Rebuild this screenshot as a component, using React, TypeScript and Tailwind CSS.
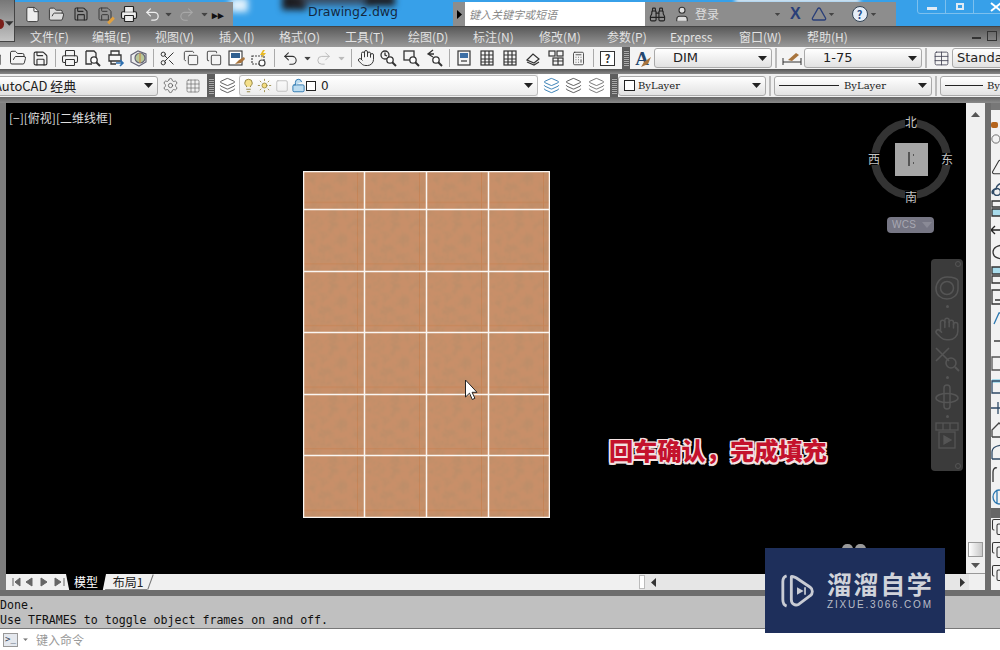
import type { ReactNode } from "react";
import {
  Binoculars, Calculator, Circle, Copy, File, FolderOpen, Grid3x3, Hand, Layers,
  Lightbulb, LockOpen, Printer, Redo2, Save, Scissors, Settings, Square,
  Sun, Table, Triangle, Undo2, User,
} from "lucide-react";

const ui = "font-['Noto_Sans_CJK_SC','Noto_Sans',sans-serif]";
const menus = [
  ["文件(F)", "w-[62px]"], ["编辑(E)", "w-[63px]"], ["视图(V)", "w-[64px]"], ["插入(I)", "w-[60px]"],
  ["格式(O)", "w-[66px]"], ["工具(T)", "w-[63px]"], ["绘图(D)", "w-[65px]"], ["标注(N)", "w-[66px]"],
  ["修改(M)", "w-[68px]"], ["参数(P)", "w-[63px]"], ["Express", "w-[69px]"], ["窗口(W)", "w-[68px]"], ["帮助(H)", "w-[50px]"],
];

function Slot({ children }: { children: ReactNode }) {
  return <div className="flex h-full w-[23px] shrink-0 items-center justify-center text-[#333]">{children}</div>;
}

function Sep() {
  return <div className="mx-[2.5px] h-[18px] w-px shrink-0 bg-[#aaa]" />;
}

function Grip() {
  return (
    <div className="flex h-full w-[8px] shrink-0 items-center justify-center bg-[#5e5e5e]">
      <div className="h-[16px] w-[5px] bg-[repeating-linear-gradient(0deg,#aaa_0,#aaa_1px,#555_1px,#555_2px)]" />
    </div>
  );
}

function Arrow({ className = "text-[#222]" }: { className?: string }) {
  return (
    <svg width="9" height="5" viewBox="0 0 9 5" className={className}>
      <path d="M0 0h9L4.5 5z" fill="currentColor" />
    </svg>
  );
}

function Combo({ className, children }: { className: string; children: ReactNode }) {
  return (
    <div className={`flex h-[20px] shrink-0 items-center justify-between overflow-hidden rounded-[3px] border border-[#aaa] bg-gradient-to-b from-white to-[#e2e2e2] pr-[4px] ${className}`}>
      {children}
      <Arrow />
    </div>
  );
}

function ZoomGlyph({ kind }: { kind: "realtime" | "window" | "prev" | "page" }) {
  return (
    <svg width="19" height="18" viewBox="0 0 19 18" fill="none" stroke="#333" strokeWidth="1.3">
      {kind === "realtime" && <circle cx="6" cy="6" r="4" />}
      {kind === "realtime" && <path d="M6 3.5V6l2 1" />}
      {kind === "window" && <rect x="2" y="2" width="10" height="9" />}
      {kind === "page" && <path d="M3 2h8l2 2v5M3 2v13h6" />}
      {kind === "prev" && <path d="M8 1L3 5l5 3M3 5h6" />}
      <circle cx="11" cy="11" r="3.2" fill="#fff" />
      <path d="M13.5 13.5l3.5 3.5" strokeWidth="2" />
    </svg>
  );
}

function PanelGlyph({ kind }: { kind: "props" | "design" | "sheet" | "markup" }) {
  return (
    <svg width="18" height="18" viewBox="0 0 18 18" fill="none" stroke="#333" strokeWidth="1.2">
      {kind === "props" && <><rect x="3" y="2" width="12" height="14" /><rect x="5" y="4" width="8" height="5" fill="#3d6fa5" stroke="none" /><path d="M6 12h6" /></>}
      {kind === "design" && <><rect x="3" y="2" width="12" height="14" /><path d="M7 2v14M11 2v14M3 6h12M3 10h12M3 13h12" /></>}
      {kind === "sheet" && <><path d="M3 11l6-6 6 5-5 4z" /><path d="M3 13l7 3 5-3" /></>}
      {kind === "markup" && <><rect x="2" y="2" width="6" height="5" /><rect x="10" y="2" width="6" height="5" /><rect x="6" y="9" width="10" height="7" /><path d="M6 12h10M11 9v7" /></>}
    </svg>
  );
}

function ToolbarOne() {
  return (
    <div className="ml-[-17px] flex h-[22px] w-[1017px] shrink-0 items-center overflow-hidden bg-[#f4f4f4]">
      <Slot><File size={17} strokeWidth={1.3} /></Slot>
      <Slot><FolderOpen size={18} strokeWidth={1.3} /></Slot>
      <Slot><Save size={17} strokeWidth={1.6} /></Slot>
      <Sep />
      <Slot><Printer size={18} strokeWidth={1.4} /></Slot>
      <Slot><ZoomGlyph kind="page" /></Slot>
      <Slot>
        <svg width="19" height="18" viewBox="0 0 19 18" fill="none" stroke="#333" strokeWidth="1.3">
          <path d="M5 6V2h8v4M3 6h12v6H3zM5 12v3h5" />
          <path d="M10 14h7M14 11l3 3-3 3" stroke="#2d6fb0" strokeWidth="1.6" />
        </svg>
      </Slot>
      <Slot>
        <svg width="19" height="18" viewBox="0 0 19 18" fill="none" stroke="#667" strokeWidth="1.2">
          <path d="M2 6l7-4 8 3v8l-7 4-8-4z" fill="#eee" />
          <circle cx="11" cy="9" r="5" fill="#b8c79a" />
          <path d="M11 4v10" stroke="#c98f4a" />
        </svg>
      </Slot>
      <Sep />
      <Slot><Scissors size={17} strokeWidth={1.4} /></Slot>
      <Slot><Copy size={16} strokeWidth={1.3} /></Slot>
      <Slot><Copy size={16} strokeWidth={1.6} className="text-[#555]" /></Slot>
      <Slot>
        <svg width="19" height="18" viewBox="0 0 19 18" fill="none" stroke="#333" strokeWidth="1.1">
          <rect x="2" y="2" width="13" height="14" fill="#fff" />
          <rect x="4" y="4" width="9" height="5" fill="#2f5f8f" stroke="none" />
          <path d="M8 15l4-4 5-3 1 2-4 4z" fill="#a8743d" stroke="none" />
        </svg>
      </Slot>
      <Slot>
        <svg width="19" height="18" viewBox="0 0 19 18" fill="none" stroke="#444" strokeWidth="1.2">
          <path d="M2 7h12v8H2z" strokeDasharray="2 1" />
          <circle cx="12" cy="14" r="3" fill="#fff" />
          <path d="M13 1l-3 5h3l-2 4 5-6h-3l2-3z" fill="#e8b923" stroke="none" />
        </svg>
      </Slot>
      <Sep />
      <div className="ml-[2px]"><Slot><Undo2 size={17} strokeWidth={1.5} /></Slot></div>
      <div className="flex w-[10px] shrink-0 justify-center"><Arrow className="scale-75 text-[#444]" /></div>
      <Slot><Redo2 size={17} strokeWidth={1.4} className="text-[#bbb]" /></Slot>
      <div className="flex w-[13px] shrink-0 justify-center"><Arrow className="scale-75 text-[#bbb]" /></div>
      <Sep />
      <Slot><Hand size={18} strokeWidth={1.3} /></Slot>
      <Slot><ZoomGlyph kind="realtime" /></Slot>
      <Slot><ZoomGlyph kind="window" /></Slot>
      <Slot><ZoomGlyph kind="prev" /></Slot>
      <Sep />
      <Slot><PanelGlyph kind="props" /></Slot>
      <Slot><PanelGlyph kind="design" /></Slot>
      <Slot><PanelGlyph kind="design" /></Slot>
      <Slot><PanelGlyph kind="sheet" /></Slot>
      <Slot><PanelGlyph kind="markup" /></Slot>
      <Slot><Calculator size={15} strokeWidth={1.3} /></Slot>
      <Sep />
      <Slot><div className="flex h-[15px] w-[15px] items-center justify-center border border-[#333] bg-white text-[11px] font-bold leading-none">?</div></Slot>
      <div className="ml-[3px] flex h-full"><Grip /></div>
      <div className="relative flex h-full w-[24px] shrink-0 items-center justify-center text-[19px] font-bold leading-none text-[#24466e] font-['Liberation_Serif',serif]">
        A
        <svg width="12" height="12" viewBox="0 0 12 12" className="absolute bottom-[1px] right-[2px]"><path d="M1 11l3-5 7-5-3 7z" fill="#a8743d" /></svg>
      </div>
      <Combo className="w-[118px] pl-[18px]"><span className="text-[13px] text-[#222] font-['DejaVu_Sans',sans-serif]">DIM</span></Combo>
      <div className="mx-[3px] h-[20px] w-[2px] shrink-0 bg-[#bbb]" />
      <Slot><svg width="20" height="16" viewBox="0 0 20 16" fill="none" stroke="#333"><path d="M1 8v7M19 8v7M1 12h18" /><path d="M6 10l8-7 3 2-7 6z" fill="#a8743d" stroke="none" /></svg></Slot>
      <Combo className="ml-[1px] w-[118px] pl-[18px]"><span className="text-[13px] text-[#222] font-['DejaVu_Sans',sans-serif]">1-75</span></Combo>
      <div className="mx-[3px] h-[20px] w-[2px] shrink-0 bg-[#bbb]" />
      <Slot><Table size={17} strokeWidth={1.2} className="text-[#445]" /></Slot>
      <div className="ml-[-1px] h-[20px] w-[80px] shrink-0 rounded-[3px] border border-[#aaa] bg-gradient-to-b from-white to-[#e2e2e2] pl-[4px] text-[13px] leading-[18px] text-[#222] font-['DejaVu_Sans',sans-serif]">Standard</div>
    </div>
  );
}

function ToolbarTwo() {
  return (
    <div className="ml-[-4px] flex h-[23px] w-[1004px] shrink-0 items-center overflow-hidden bg-[#f0f0f0]">
      <Combo className="w-[162px]"><span className={`ml-[-3px] text-[13px] text-[#222] ${ui}`}>AutoCAD 经典</span></Combo>
      <div className="flex h-full w-[49px] shrink-0 items-center justify-around pl-[1px] pr-[3px]">
        <Settings size={17} strokeWidth={1.1} className="text-[#555]" />
        <Grid3x3 size={16} strokeWidth={1} className="text-[#666]" />
      </div>
      <Grip />
      <div className="flex h-full w-[24px] shrink-0 items-center justify-center bg-white"><Layers size={17} strokeWidth={1.2} className="text-[#444]" /></div>
      <div className="flex h-[21px] w-[299px] shrink-0 items-center rounded-[3px] border border-[#bbb] bg-gradient-to-b from-white to-[#ececec] pr-[4px]">
        <Lightbulb size={15} strokeWidth={1.4} className="ml-[1px] fill-[#f5e08a] text-[#8a7a35]" />
        <Sun size={15} strokeWidth={1.4} className="ml-[1px] fill-[#f5dd80] text-[#9a8a45]" />
        <Square size={14} strokeWidth={1.5} className="ml-[3px] text-[#bbb]" />
        <LockOpen size={15} strokeWidth={1.5} className="ml-[2px] fill-[#bcdcf0] text-[#2d78b0]" />
        <div className="h-[10px] w-[10px] border border-[#222] bg-white" />
        <span className="ml-[5px] flex-1 text-[12px] text-[#222] font-['DejaVu_Sans',sans-serif]">0</span>
        <Arrow />
      </div>
      <div className="flex h-full w-[72px] shrink-0 items-center justify-around bg-white px-[2px]">
        <Layers size={17} strokeWidth={1.3} className="text-[#2d78b0]" />
        <Layers size={17} strokeWidth={1.1} className="text-[#333]" />
        <Layers size={17} strokeWidth={1.1} className="text-[#555]" />
      </div>
      <Grip />
      <Combo className="w-[148px] pl-[5px]">
        <span className="flex items-center text-[10px] text-[#222] font-['DejaVu_Serif',serif]"><span className="mr-[3px] h-[11px] w-[11px] border border-[#222] bg-white" />ByLayer</span>
      </Combo>
      <div className="mx-[3px] h-[20px] w-[2px] shrink-0 bg-[#bbb]" />
      <Combo className="w-[158px] pl-[4px]">
        <span className="flex items-center text-[10px] text-[#222] font-['DejaVu_Serif',serif]"><span className="mr-[5px] h-px w-[60px] bg-[#222]" />ByLayer</span>
      </Combo>
      <div className="mx-[3px] h-[20px] w-[2px] shrink-0 bg-[#bbb]" />
      <div className="flex h-[20px] w-[90px] shrink-0 items-center rounded-[3px] border border-[#aaa] bg-gradient-to-b from-white to-[#e2e2e2] pl-[4px] text-[10px] text-[#222] font-['DejaVu_Serif',serif]"><span className="mr-[4px] h-px w-[38px] bg-[#222]" />ByLayer</div>
    </div>
  );
}

function HatchTiles() {
  const xs = [0.5, 61.5, 123.5, 185.5, 246.5];
  const ys = [0.5, 38.5, 100.5, 161.5, 223.5, 284.5, 346.5];
  return (
    <svg width="247" height="347" viewBox="0 0 247 347" className="absolute left-[297px] top-[68px]">
      <defs>
        <filter id="grain" x="0" y="0" width="100%" height="100%">
          <feTurbulence type="fractalNoise" baseFrequency="0.11" numOctaves="3" seed="4" stitchTiles="stitch" />
          <feColorMatrix values="0 0 0 0 0.5  0 0 0 0 0.27  0 0 0 0 0.14  1.8 0 0 0 -0.66" />
        </filter>
        <pattern id="tile" x="0" y="-23" width="62" height="61.6" patternUnits="userSpaceOnUse">
          <rect width="62" height="62" fill="#c88f69" />
          <rect width="62" height="62" filter="url(#grain)" />
          <path d="M54.5 0v62M0 54.5h62" stroke="#c6763f" strokeOpacity="0.4" />
        </pattern>
      </defs>
      <rect width="247" height="347" fill="url(#tile)" />
      {xs.map((x) => <path key={x} d={`M${x} 0V347`} stroke="#faf6f2" strokeWidth="1.5" />)}
      {ys.map((y) => <path key={y} d={`M0 ${y}H247`} stroke="#faf6f2" strokeWidth="1.5" />)}
    </svg>
  );
}

function ViewCube() {
  return (
    <div className={`absolute left-[860px] top-[9px] h-[125px] w-[92px] text-[12px] leading-none text-[#c4c4c4] ${ui}`}>
      <div className="absolute left-[5px] top-[7px] flex h-[80px] w-[80px] items-center justify-center rounded-full border-[8px] border-[#333]">
        <div className="flex h-[33px] w-[33px] items-center justify-center gap-[3px] bg-[#a6a6a6]">
          <span className="h-[14px] w-[2px] bg-[#555]" />
          <span className="h-[10px] w-px border-y-2 border-[#555]" />
        </div>
      </div>
      <span className="absolute left-[39px] top-[4px] bg-black">北</span>
      <span className="absolute left-[39px] top-[79px] bg-black">南</span>
      <span className="absolute left-[2px] top-[41px] bg-black">西</span>
      <span className="absolute left-[75px] top-[41px] bg-black">东</span>
      <div className="absolute left-[21px] top-[105px] flex h-[16px] w-[47px] items-center rounded-[4px] bg-[#767684] pl-[5px] text-[10px] font-medium tracking-[0.3px] text-[#a8a8b2] font-['Liberation_Sans',sans-serif]">
        WCS
        <svg width="10" height="6" viewBox="0 0 10 6" className="ml-[6px]"><path d="M0 0h10L5 6z" fill="#8a8a96" /></svg>
      </div>
    </div>
  );
}

function NavBar() {
  return (
    <div className="absolute left-[925px] top-[156px] flex h-[212px] w-[32px] flex-col items-center gap-[4px] rounded-[4px] bg-[#3b3b3b] pt-[16px] text-[#555]">
      <span className="absolute right-[2px] top-[2px] h-[6px] w-[6px] rounded-full border border-current" />
      <span className="absolute bottom-[2px] right-[2px] h-[6px] w-[6px] rounded-full border border-current" />
      <svg width="26" height="26" viewBox="0 0 26 26" fill="none" stroke="currentColor" strokeWidth="1.5"><path d="M13 2c7 0 11 2 11 4v8c0 6-5 10-11 10S2 20 2 14 6 2 13 2z" /><circle cx="13" cy="13" r="6.5" /></svg>
      <span className="mb-[4px] h-[3px] w-[3px] rounded-full bg-current" />
      <Hand size={26} strokeWidth={1.4} />
      <svg width="26" height="26" viewBox="0 0 26 26" fill="none" stroke="currentColor" strokeWidth="1.6"><path d="M2 2l13 13M15 2L2 15" /><circle cx="17" cy="17" r="5" /><path d="M21 21l4 4" strokeWidth="2" /></svg>
      <span className="h-[3px] w-[3px] rounded-full bg-current" />
      <svg width="26" height="28" viewBox="0 0 26 28" fill="none" stroke="currentColor" strokeWidth="1.5"><rect x="10" y="2" width="6" height="24" rx="3" /><ellipse cx="13" cy="15" rx="11" ry="4.5" /></svg>
      <span className="h-[3px] w-[3px] rounded-full bg-current" />
      <svg width="24" height="32" viewBox="0 0 24 32" fill="none" stroke="currentColor" strokeWidth="1.3"><rect x="1" y="1" width="22" height="7" /><path d="M8 1v7M15 1v7" /><rect x="4" y="10" width="16" height="16" /><path d="M9 14l7 4-7 4z" fill="currentColor" /></svg>
    </div>
  );
}

function CadCanvas() {
  return (
    <div className="relative min-w-0 flex-1 overflow-hidden bg-black">
      <div className={`pl-[3px] pt-[7px] text-[12px] leading-[16px] text-[#dedede] ${ui}`}>[−][俯视][二维线框]</div>
      <HatchTiles />
      <ViewCube />
      <NavBar />
      <svg width="14" height="22" viewBox="0 0 14 22" className="absolute left-[458px] top-[276px]">
        <path d="M1.5 1v17l4-3.8 2.8 6.3 2.6-1.2-2.8-6H13z" fill="#fff" stroke="#222" strokeWidth="1" />
      </svg>
      <div className={`absolute left-[603px] top-[332px] text-[24.2px] font-black leading-[30px] text-[#c4122c] [text-shadow:1.5px_0_0_#f3e3e3,-1.5px_0_0_#f3e3e3,0_1.5px_0_#f3e3e3,0_-1.5px_0_#f3e3e3,1.5px_1.5px_0_#f3e3e3,-1.5px_-1.5px_0_#f3e3e3,1.5px_-1.5px_0_#f3e3e3,-1.5px_1.5px_0_#f3e3e3] ${ui}`}>
        回车确认，完成填充
      </div>
      <div className="absolute left-[836px] top-[441px] flex gap-[2px]">
        <span className="h-[10px] w-[11px] rounded-full bg-[#9a9a9a]" />
        <span className="h-[10px] w-[11px] rounded-full bg-[#9a9a9a]" />
      </div>
    </div>
  );
}

function VerticalScroll() {
  return (
    <div className="flex w-[19px] shrink-0 flex-col items-center justify-between border-b border-[#999] bg-[#f0f0f0] pb-[5px] pt-[9px]">
      <Arrow className="rotate-180 text-[#555]" />
      <div className="flex flex-col items-center gap-[6px]">
        <div className="h-[15px] w-[15px] border border-[#999] bg-gradient-to-r from-white to-[#c8c8c8]" />
        <Arrow className="text-[#555]" />
      </div>
    </div>
  );
}

function TabStrip() {
  return (
    <div className={`flex h-[16px] shrink-0 items-center bg-[#f0f0f0] text-[12px] leading-none text-[#222] ${ui}`}>
      <div className="flex h-full w-[60px] items-center justify-around text-[#666]">
        {["M6 1v8M13 1L8 5l5 4z", "M10 1L4 5l6 4z", "M4 1l6 4-6 4z", "M12 1v8M3 1l6 4-6 4z"].map((d) => (
          <svg key={d} width="14" height="10" viewBox="0 0 14 10"><path d={d} fill="currentColor" stroke="currentColor" /></svg>
        ))}
      </div>
      <div className="flex h-full w-[40px] items-center justify-center bg-black text-white [clip-path:polygon(0_0,100%_0,92%_100%,8%_100%)]">模型</div>
      <div className="ml-[-1px] flex h-full w-[46px] items-center justify-center border-b border-[#888] [clip-path:polygon(0_100%,8%_0,100%_0,92%_100%)]">布局1</div>
      <span className="ml-[-1px] h-[16px] w-px rotate-[20deg] bg-[#777]" />
      <div className="ml-[488px] flex h-full w-[330px] items-center bg-[#e6e6e6] text-[#333]">
        <span className="h-[14px] w-[6px] border border-[#bbb] bg-white" />
        <Arrow className="ml-[4px] rotate-90" />
        <div className="flex-1" />
        <Arrow className="mr-[2px] -rotate-90" />
      </div>
    </div>
  );
}

function SideIcon({ d, blue = "", stroke = "#333" }: { d: string; blue?: string; stroke?: string }) {
  return (
    <div className="flex h-[22.2px] shrink-0 items-center">
      <svg width="14" height="18" viewBox="0 0 14 18" fill="none" stroke={stroke} strokeWidth="1.3" className="shrink-0">
        {blue && <path d={blue} fill="#a9dcec" stroke="none" />}
        <path d={d} />
      </svg>
    </div>
  );
}

function RightToolbar() {
  const icons = [
    { d: "M1 2h13v6H1zM1 10h13v7H1z", blue: "M1 10h13v7H1z" },
    { d: "M0 9h14M4 5L0 9l4 4", stroke: "#222" },
    { d: "M14 2C6 2 2 5 2 9s4 7 12 7" },
    { d: "M1 1h13v7H1zM1 10h13v7H1z", blue: "M1 1h13v7H1z" },
    { d: "M1 2h13v14H1zM4 12h10" },
    { d: "M3 14L8 3l6 0", stroke: "#2d78b0" },
    { d: "M3 9h7", stroke: "#222" },
    { d: "M14 3H1v13h13", stroke: "#555" },
    { d: "M14 4H1v12h13", blue: "M1 2h8v4H1z", stroke: "#2f4a66" },
    { d: "M0 9h14M7 3v12", stroke: "#2f4a66" },
    { d: "M1 16V9l7-7 6 5M1 16h13", stroke: "#444" },
    { d: "M1 16V9c0-4 4-7 13-7M1 16h13", stroke: "#2f4a66" },
    { d: "M2 17V7c0-3 2-5 4-4", stroke: "#333" },
    { d: "M2 9a6 7 0 1 1 12 0M2 9a6 7 0 0 0 12 0M6 2v14", stroke: "#2d78b0" },
  ];
  return (
    <div className="flex w-[9px] shrink-0 flex-col overflow-hidden bg-[#f2f2f2]">
      <div className="h-[7px] shrink-0 bg-[#777]" />
      <div className="flex h-[46px] shrink-0 flex-col items-start gap-[6px] pt-[12px]">
        <span className="h-[6px] w-[7px] rounded-[2px] bg-[#b5651d]" />
        <Circle size={10} strokeWidth={1.6} className="shrink-0 text-[#333]" />
      </div>
      <div className="flex h-[22px] shrink-0 items-center"><Triangle size={18} strokeWidth={1.4} className="shrink-0 text-[#333]" /></div>
      <div className="flex h-[19px] shrink-0 items-center">
        <svg width="14" height="16" viewBox="0 0 14 16" fill="none" stroke="#2f4a66" strokeWidth="1.5" className="shrink-0"><path d="M2 14c-2-2 0-5 3-5 0-3 3-6 9-6" /><circle cx="6" cy="12" r="3.5" /></svg>
      </div>
      {icons.map((icon) => <SideIcon key={icon.d} {...icon} />)}
      <div className="h-[10px] shrink-0 bg-[#666]" />
      <div className="flex flex-col gap-[5px]">
        <Copy size={18} strokeWidth={1.4} className="shrink-0 text-[#333]" />
        <Copy size={18} strokeWidth={1.4} className="shrink-0 text-[#333]" />
        <Copy size={18} strokeWidth={1.4} className="shrink-0 text-[#333]" />
      </div>
    </div>
  );
}

function Watermark() {
  return (
    <div className="absolute left-[765px] top-[548px] flex h-[85px] w-[180px] items-center bg-[#1e2f5b] pl-[15px] text-[#d0d3da]">
      <svg width="34" height="36" viewBox="0 0 36 38" fill="none" stroke="#c9ccd4" strokeWidth="3" strokeLinejoin="round" className="shrink-0">
        <path d="M7 3c-3 1-4 3-4 6v19c0 4 1 6 4 7" />
        <path d="M12 4v24c0 5 4 7 8 5l12-9c3-2 3-7 0-9L17 5c-2-1-5-2-5-1z" />
        <path d="M18 15l7 4-7 4z" fill="#c9ccd4" stroke="none" />
        <path d="M26.5 15v8" strokeWidth="1.8" />
      </svg>
      <div className="ml-[13px] flex flex-col">
        <span className={`text-[25px] font-bold leading-[27px] tracking-[1.6px] ${ui}`}>溜溜自学</span>
        <span className="mt-[2px] text-[10px] leading-[12px] tracking-[1.8px] text-[#b9bdc8] font-['Liberation_Sans',sans-serif]">ZIXUE.3066.COM</span>
      </div>
    </div>
  );
}

export default function App() {
  return (
    <div className={`relative flex h-[650px] w-[1000px] flex-col overflow-hidden bg-white ${ui}`}>
      {/* title bar */}
      <div className="relative flex h-[26px] shrink-0 items-stretch overflow-hidden bg-[#37a0e9] pt-[2px]">
        <span className="absolute left-[282px] top-[-6px] h-[16px] w-[24px] bg-[#1d1d22] blur-[3px]" />
        <span className="absolute left-[300px] top-[-6px] h-[10px] w-[70px] bg-[#3a3a44] blur-[4px]" />
        <span className="absolute left-[365px] top-[-5px] h-[11px] w-[30px] bg-[#1d1d22] blur-[3px]" />
        <span className="absolute left-[230px] top-[-2px] h-[14px] w-[18px] bg-[#dff0fb] blur-[3px]" />
        <span className="absolute left-[735px] top-[-4px] h-[7px] w-[125px] bg-[#dfe8f0] blur-[2px]" />
        <div className="relative ml-[15px] flex w-[218px] shrink-0 items-center bg-[#8d8d8d] pl-[9px] text-[#333]">
          <File size={17} strokeWidth={1.3} className="fill-[#eee]" />
          <FolderOpen size={17} strokeWidth={1.3} className="ml-[7px] fill-[#ddd]" />
          <Save size={16} strokeWidth={1.7} className="ml-[8px] text-[#2b2b2b]" />
          <div className="relative ml-[8px]">
            <Save size={16} strokeWidth={1.5} className="text-[#3a3a3a]" />
            <span className="absolute bottom-0 right-[-2px] h-[3px] w-[8px] -rotate-45 bg-[#e0a040]" />
          </div>
          <Printer size={18} strokeWidth={1.6} className="ml-[7px] fill-[#eee] text-[#222]" />
          <Undo2 size={17} strokeWidth={1.8} className="ml-[6px] text-[#eee]" />
          <Arrow className="ml-[3px] scale-75 text-[#444]" />
          <Redo2 size={17} strokeWidth={1.5} className="ml-[5px] text-[#a8a8a8]" />
          <Arrow className="ml-[5px] scale-75 text-[#444]" />
          <span className="ml-[3px] text-[11px] font-bold leading-none text-[#111]">▸▸</span>
        </div>
        <div className="relative flex-1 pl-[75px] text-[12.5px] leading-[19px] text-[#14283f] font-['DejaVu_Sans',sans-serif]">Drawing2.dwg</div>
        <div className="relative flex w-[12px] shrink-0 items-center justify-center bg-[#8d8d8d]"><Arrow className="-rotate-90 text-black" /></div>
        <div className={`relative w-[180px] shrink-0 bg-white pl-[4px] text-[11px] italic leading-[24px] text-[#888] ${ui}`}>键入关键字或短语</div>
        <div className={`relative flex w-[251px] shrink-0 items-center bg-[#8d8d8d] pl-[4px] text-[#eee] ${ui}`}>
          <Binoculars size={17} strokeWidth={1.6} className="text-[#222]" />
          <User size={18} strokeWidth={1.5} className="ml-[7px] fill-[#ddd] text-[#333]" />
          <span className="ml-[4px] text-[12px] leading-none text-[#ddd]">登录</span>
          <Arrow className="ml-[54px] scale-[0.6] text-[#444]" />
          <span className="ml-[8px] text-[16px] font-black leading-none text-[#2a3f78] font-['Liberation_Sans',sans-serif]">X</span>
          <Triangle size={16} strokeWidth={2} className="ml-[10px] text-[#2a3f78]" />
          <Arrow className="scale-[0.6] text-[#444]" />
          <div className="ml-[16px] flex h-[16px] w-[16px] items-center justify-center rounded-full border border-[#345] bg-[#e6eef8] text-[11px] font-bold leading-none text-[#26508c]">?</div>
          <Arrow className="ml-[1px] scale-[0.6] text-[#444]" />
        </div>
        <div className="relative w-[104px] flex-none">
          <div className="absolute left-[21px] top-[-3px] flex h-[15px] w-[90px] items-center rounded-b-[3px] border border-[#7cc0ee]">
            <div className="flex h-full w-[28px] items-center justify-center border-r border-[#7cc0ee]"><span className="mt-[3px] h-[3px] w-[10px] bg-[#dfeaf4]" /></div>
            <div className="flex h-full w-[28px] items-center justify-center border-r border-[#7cc0ee]"><span className="h-[7px] w-[8px] border-2 border-[#dfeaf4]" /></div>
            <svg width="12" height="10" viewBox="0 0 12 10" className="ml-[16px] shrink-0"><path d="M1 1l10 8M11 1L1 9" stroke="#fff" strokeWidth="2" /></svg>
          </div>
        </div>
      </div>

      {/* menu bar */}
      <div className="relative flex h-[21px] shrink-0 items-center border-t border-[#444] bg-gradient-to-b from-[#5a5a5a] to-[#9a9a9a] pl-[30px] text-[12px] leading-none text-[#e2e2e2]">
        {menus.map(([m, w]) => <span key={m} className={`shrink-0 ${w}`}>{m}</span>)}
        <div className="absolute right-[3px] top-[4px] flex items-center gap-[6px] text-[#222]">
          <span className="mt-[4px] h-[2px] w-[9px] bg-[#333]" />
          <span className="h-[10px] w-[10px] border border-[#333]" />
        </div>
      </div>

      <ToolbarOne />
      <div className="h-[5px] shrink-0 bg-gradient-to-b from-[#555] to-[#8a8a8a]" />
      <ToolbarTwo />
      <div className="h-[6px] shrink-0 bg-gradient-to-b from-[#666] to-[#8a8a8a]" />

      {/* drawing area */}
      <div className="flex h-[487px] shrink-0">
        <div className="w-[6px] shrink-0 bg-[#7d7d7d]" />
        <div className="flex min-w-0 flex-1 flex-col">
          <div className="flex min-h-0 flex-1">
            <CadCanvas />
            <VerticalScroll />
          </div>
          <TabStrip />
        </div>
        <div className="w-[6px] shrink-0 bg-[#6e6e6e]" />
        <RightToolbar />
      </div>

      {/* command line */}
      <div className="h-[6px] shrink-0 bg-[#6e6e6e]" />
      <div className="h-[33px] shrink-0 border-b border-[#777] bg-[#c0c0c0] pt-[2px] text-[11.6px] leading-[15px] text-[#111] font-['DejaVu_Sans_Mono',monospace]">
        <div>Done.</div>
        <div>Use TFRAMES to toggle object frames on and off.</div>
      </div>
      <div className="flex min-h-0 flex-1 items-center bg-white pl-[3px]">
        <div className="flex h-[14px] w-[15px] items-center justify-center border border-[#999] bg-[#e4e8ee] text-[9px] leading-none text-[#345] font-['DejaVu_Sans_Mono',monospace]">&gt;_</div>
        <Arrow className="ml-[3px] scale-[0.55] text-[#777]" />
        <span className="ml-[6px] text-[12px] leading-none text-[#999]">键入命令</span>
      </div>

      {/* overlay: app button and watermark */}
      <div className="absolute left-0 top-0 flex h-[42px] w-[15px] items-center overflow-hidden border-b border-r border-[#444] bg-gradient-to-b from-[#777] to-[#c4c4c4] pt-[6px]">
        <span className="ml-[-5px] h-[10px] w-[10px] rounded-full bg-[#7a1f1a]" />
        <Arrow className="ml-[1px] text-[#333]" />
      </div>
      <Watermark />
    </div>
  );
}
